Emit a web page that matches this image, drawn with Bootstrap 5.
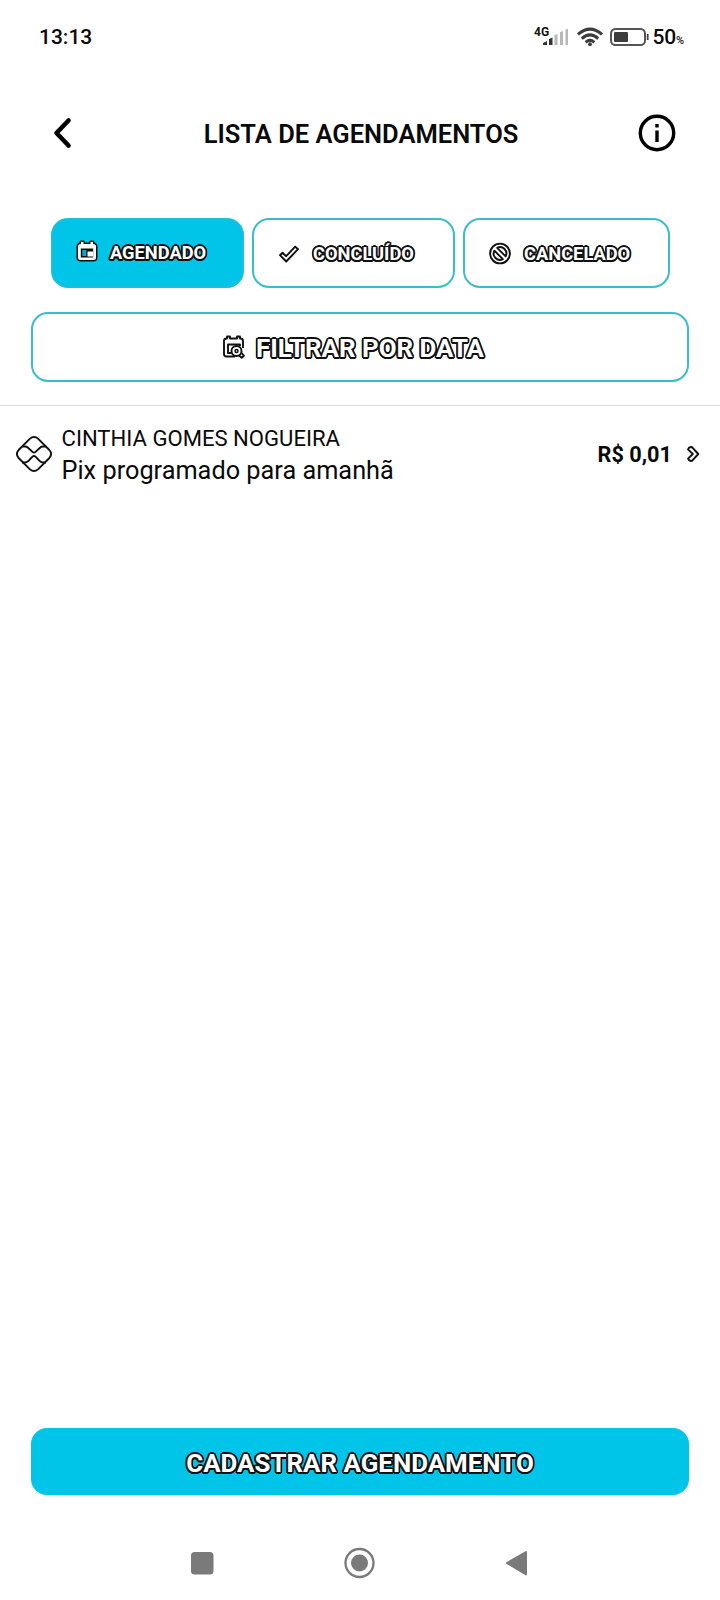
<!DOCTYPE html>
<html lang="pt-BR">
<head>
<meta charset="utf-8">
<meta name="viewport" content="width=device-width, initial-scale=1">
<title>Lista de agendamentos</title>
<link href="https://cdn.jsdelivr.net/npm/bootstrap@5.3.0/dist/css/bootstrap.min.css" rel="stylesheet">
<style>
body{font-family:Roboto,"Liberation Sans",sans-serif;color:#0a0a0a;background:#fff;line-height:1}
svg{display:block;flex:none;overflow:visible}
.screen{height:1600px;overflow:hidden}
.status{height:72px;padding:1px 35px 0 39px;font-size:21px}
.clock{font-weight:500;padding-top:1px}
.level{font-weight:500;padding-top:1px;letter-spacing:-.2px}
.cell{margin-right:7px}
.topbar{height:122px;padding:0 43px 0 53px}
.title{font-size:25.5px;font-weight:600;margin:0;padding:2px 0 0 14px;line-height:30px}
.tabs-row{height:70px;margin:24px 50px 0 51px;gap:8px}
.pill{border:2px solid #3bbccd;border-radius:17px;background:#fff;padding:0;display:flex;align-items:center;line-height:1}
.pill.on{background:#00c4e8;border-color:#1fbdd8}
.outlined{color:#fff;font-weight:700;white-space:nowrap;text-shadow:1.6px 0 #111,-1.6px 0 #111,0 1.6px #111,0 -1.6px #111,1.2px 1.2px #111,-1.2px 1.2px #111,1.2px -1.2px #111,-1.2px -1.2px #111,.7px 1.5px #111,-.7px 1.5px #111,.7px -1.5px #111,-.7px -1.5px #111,1.5px .7px #111,-1.5px .7px #111,1.5px -.7px #111,-1.5px -.7px #111}
.tab-text{font-size:18.3px}
.tab-text.low{padding-top:2px}
.big-text{font-size:25.9px;padding-top:4px}
.wide{margin:24px 31px 0;height:70px}
.entry{border-top:1px solid #dedede;margin-top:23px;height:96px;padding:1px 21px 0 16px}
.texts{margin-left:9.500px;padding-top:1px}
.who{font-size:22.1px;line-height:30px;padding-bottom:2px}
.what{font-size:25.3px;line-height:32px}
.amount{font-size:21.7px;font-weight:700;margin-right:15px;padding-top:2px}
.cta{margin:0 31px;height:67px;border:0;background:#00c4e8;border-radius:16px}
.sysnav{height:105px;padding:36px 0 0 191px}
.ico-day{margin:-4px 12px 0 23px}
.ico-check{margin:1px 14px 0 25px}
.ico-ban{margin:1px 13px 0 24px}
.ico-search{margin:0 11px 0 190px}
</style>
</head>
<body>
<main class="screen d-flex flex-column">
  <div class="status d-flex align-items-center justify-content-between">
    <span class="clock">13:13</span>
    <div class="d-flex align-items-center">
      <svg class="cell" width="35" height="20" viewBox="534 26 35 20"><text x="533" y="35" font-size="12" font-weight="700" fill="#111">4G</text><path d="M542 44v-2l4-2V44z M548 44v-6l3.500-1.500V44z" fill="#333"/><path d="M553.500 44V34l3-1v11z M559 44V31l3-1v14z M564.500 44V28.500l2.500-.8V44z" fill="#b8b8b8"/></svg>
      <svg width="26" height="20" viewBox="0 0 27 20" fill="none" stroke="#3d3d3d" stroke-width="3.200"><path d="M1 7.300Q13.500-3.800 26 7.300M5 11.600Q13.500 4 22 11.600M9 15.500Q13.500 11.500 18 15.500"/><circle cx="13.500" cy="17.500" r="2" fill="#3d3d3d" stroke="none"/></svg>
      <svg style="margin-left:7px" width="39" height="20" viewBox="0 0 39 20"><rect x="1" y="2" width="34" height="16" rx="4.500" fill="none" stroke="#555" stroke-width="2"/><rect x="4" y="5" width="14" height="10" rx="1" fill="#3d3d3d"/><path d="M36.800 7h1.800v6h-1.800z" fill="#444"/></svg>
      <span class="level ms-1">50</span><svg width="9" height="14" viewBox="0 0 9 14"><text x="0" y="13.500" font-size="11" font-weight="500" fill="#222">%</text></svg>
    </div>
  </div>
  <header class="topbar d-flex align-items-center justify-content-between">
    <svg width="18" height="30" viewBox="0 0 18 30" fill="none" stroke="#000" stroke-width="4.600" stroke-linecap="round" stroke-linejoin="round"><path d="M15.500 2.500L3.500 15l12 12.500"/></svg>
    <h1 class="title">LISTA DE AGENDAMENTOS</h1>
    <svg width="40" height="40" viewBox="0 0 40 40"><circle cx="20" cy="20" r="16.700" fill="none" stroke="#000" stroke-width="3.400"/><path d="M18.300 11h3.400v3.400h-3.400zM18.300 17.500h3.400v11.500h-3.400z"/></svg>
  </header>
  <nav class="tabs-row d-flex">
    <button class="pill on" style="width:193px">
      <svg class="ico-day" width="22" height="24" viewBox="0 0 22 24"><path d="M5 3h2.500v2h7V3H17v2q3 0 3 2.500v11Q20 21 17.500 21h-13Q2 21 2 18.500v-11Q2 5 5 5z" fill="#fff" stroke="#111" stroke-width="3" stroke-linejoin="round" paint-order="stroke"/><path d="M4.800 9.500h12.400v9H4.800z" fill="#111"/><path d="M6.300 11h4v6h-4z" fill="#00a9c9"/><path d="M11.500 12.500h5.500v5h-5.500z" fill="#fff"/></svg>
      <span class="outlined tab-text">AGENDADO</span>
    </button>
    <button class="pill" style="width:203px">
      <svg class="ico-check" width="20" height="18" viewBox="0 0 20 18"><path d="M1 10.200L3.500 7.800 7.200 11.200 16.200 1.600 19 4.200 7.200 16.500z" fill="#fff" stroke="#111" stroke-width="1.900" stroke-linejoin="round"/></svg>
      <span class="outlined tab-text low">CONCLUÍDO</span>
    </button>
    <button class="pill" style="width:207px">
      <svg class="ico-ban" width="22" height="22" viewBox="0 0 22 22" fill="none" stroke="#111" stroke-width="1.900"><circle cx="11" cy="10.500" r="9.900"/><path d="M8.170 4.850A6.300 6.300 0 0 1 16.650 13.330zM5.350 7.670A6.300 6.300 0 0 0 13.830 16.150z" stroke-linejoin="round"/></svg>
      <span class="outlined tab-text low">CANCELADO</span>
    </button>
  </nav>
  <button class="pill wide">
    <svg class="ico-search" width="22" height="24" viewBox="0 0 22 24" fill="none" stroke="#111" stroke-width="1.900" stroke-linejoin="round"><path d="M12 21.500H3.500Q1 21.500 1 19V6Q1 3.500 3.500 3.500H4V1.500h3v2h7v-2h3v2h.5Q20 3.500 20 6v7M9.500 18H5V9.500h12v1.500"/><path d="M16 20.500l2.700 2.300 2.200-2-2.200-2.800" fill="#fff"/><circle cx="13.500" cy="16" r="5" fill="#fff"/><circle cx="13.500" cy="16" r="1.500" stroke-width="1.500"/></svg>
    <span class="outlined big-text">FILTRAR POR DATA</span>
  </button>
  <section class="entry d-flex align-items-center">
    <svg width="36" height="36" viewBox="0 0 36 36" fill="none" stroke="#111" stroke-width="1.900" stroke-linejoin="round"><path d="M14 2.600Q18-.8 22 2.600L33.400 14Q36.800 18 33.400 22L22 33.400Q18 36.800 14 33.400L2.600 22Q-.8 18 2.600 14z"/><path d="M6 10.500H9q1.700 0 3 1.200l4.500 4.200q1.500 1.300 3 0l4.500-4.200q1.300-1.200 3-1.200h3M6 26.500H9q1.700 0 3-1.200l4.500-4.700q1.500-1.300 3 0l4.500 4.700q1.300 1.200 3 1.200h3"/></svg>
    <div class="texts flex-grow-1">
      <div class="who">CINTHIA GOMES NOGUEIRA</div>
      <div class="what">Pix programado para amanhã</div>
    </div>
    <span class="amount">R$ 0,01</span>
    <svg width="12" height="16" viewBox="0 0 12 16"><path d="M1 3.400Q1.500 1.500 3.800 1L5.200 1.300 11.300 8 5.200 14.700 3.800 15Q1.500 14.500 1 12.600L5.800 8z" fill="#fff" stroke="#111" stroke-width="1.900" stroke-linejoin="round"/></svg>
  </section>
  <button class="cta mt-auto"><span class="outlined big-text d-inline-block">CADASTRAR AGENDAMENTO</span></button>
  <footer class="sysnav d-flex align-items-start">
    <svg width="336" height="60" viewBox="191 1531 336 60"><g fill="#7a7a7a"><rect x="191" y="1552" width="22.500" height="22.500" rx="3.500"/><circle cx="359.500" cy="1563" r="8.500"/><path d="M507 1563l19-11v22.500z" stroke="#7a7a7a" stroke-width="2" stroke-linejoin="round"/></g><circle cx="359.500" cy="1563" r="14" fill="none" stroke="#7a7a7a" stroke-width="2.300"/></svg>
  </footer>
</main>
<script src="https://cdn.jsdelivr.net/npm/bootstrap@5.3.0/dist/js/bootstrap.bundle.min.js"></script>
</body>
</html>
